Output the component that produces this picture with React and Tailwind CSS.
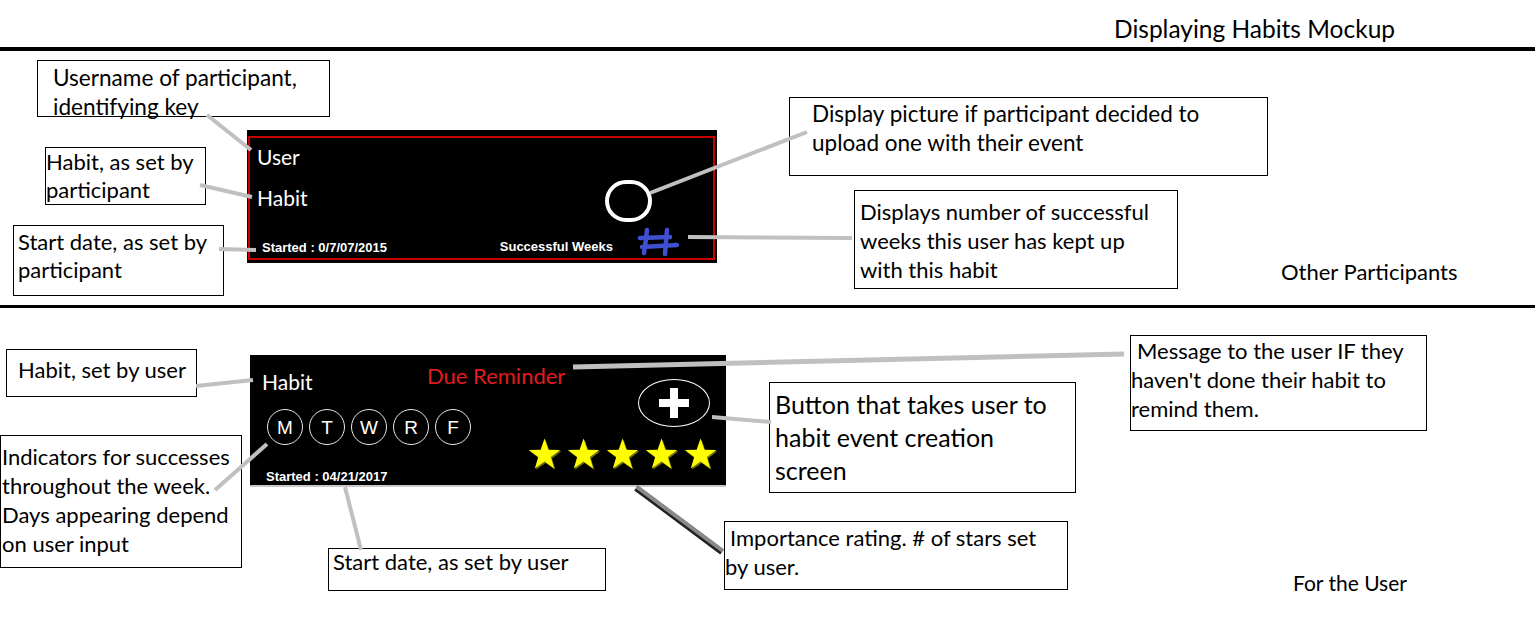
import React from "react";

const cal = { fontFamily: "Lato, 'Open Sans', sans-serif" };
const ar = { fontFamily: "'Liberation Sans', Arial, sans-serif" };

function Box({ className, children }) {
  return (
    <div
      className={"absolute border border-black bg-white text-black whitespace-nowrap " + className}
      style={cal}
    >
      {children}
    </div>
  );
}

const STAR = "17,0 21,11.5 33.2,11.75 23.5,19.1 27,30.8 17,23.8 7,30.8 10.5,19.1 0.8,11.75 13,11.5";

function Star() {
  return (
    <svg width="34" height="33" viewBox="0 0 35 33" className="shrink-0">
      <polygon points={STAR} transform="translate(1.2,1.4)" fill="#6f6f00" />
      <polygon points={STAR} fill="#ffff00" />
    </svg>
  );
}

function Day({ l }) {
  return (
    <div
      className="w-[36px] h-[36px] shrink-0 rounded-full border-[1.5px] border-[#e8e8e8] flex items-center justify-center text-white text-[19px] leading-none"
      style={ar}
    >
      {l}
    </div>
  );
}

function OtherCard() {
  return (
    <div className="absolute left-[247px] top-[130px] w-[470px] h-[133px] bg-black">
      <div className="absolute left-[1px] top-[6px] right-[2px] bottom-[3px] border-2 border-[#c80000]" />
      <div className="relative flex flex-col pl-[10px] pt-[14px] pr-[35px] text-white">
        <div className="text-[21px] leading-[26px]" style={cal}>User</div>
        <div className="flex items-start justify-between mt-[13px] h-[41px] pr-[30px]">
          <div className="text-[21px] leading-[26px] mt-[2px]" style={cal}>Habit</div>
          <div className="w-[47px] h-[42px] -mt-[3px] rounded-full border-[4px] border-white" />
        </div>
        <div className="flex items-start justify-between">
          <div className="mt-[16px] ml-[5px] text-[13px] font-bold leading-[15px]" style={ar}>
            Started : 0/7/07/2015
          </div>
          <div className="flex items-start gap-[24px]">
            <div className="mt-[15px] text-[13px] font-bold leading-[15px]" style={ar}>
              Successful Weeks
            </div>
            <svg width="45" height="35" viewBox="0 0 45 35">
              <g stroke="#3e4fd2" strokeWidth="4.5" strokeLinecap="round" fill="none">
                <path d="M10 6 Q9 16 7 29" />
                <path d="M30 6 Q29 18 28 30" />
                <path d="M3 14 L33 13" />
                <path d="M5 23 Q22 22 40 21" />
              </g>
            </svg>
          </div>
        </div>
      </div>
    </div>
  );
}

function UserCard() {
  return (
    <div className="absolute left-[250px] top-[355px] w-[476px] h-[132px] bg-black border-b-2 border-[#c8c8c8] flex pl-[12px]">
      <div className="flex flex-col w-[165px] shrink-0 pt-[14px]">
        <div className="text-white text-[21px] leading-[26px]" style={cal}>Habit</div>
        <div className="flex gap-[6px] mt-[14px] ml-[5px]">
          {["M", "T", "W", "R", "F"].map((d) => (
            <Day key={d} l={d} />
          ))}
        </div>
        <div className="mt-[24px] ml-[4px] text-white text-[13px] font-bold leading-[15px] whitespace-nowrap" style={ar}>
          Started : 04/21/2017
        </div>
      </div>
      <div className="flex-1 w-0 pt-[8px]">
        <div className="text-[#e01c1c] text-[22px] leading-[26px] whitespace-nowrap" style={cal}>
          Due Reminder
        </div>
      </div>
      <div className="flex flex-col items-end pt-[24px] pr-[8px]">
        <div className="w-[72px] h-[48px] mr-[8px] rounded-[50%] border-[1.5px] border-white flex items-center justify-center">
          <svg width="30" height="30" viewBox="0 0 30 30">
            <rect x="11" y="0" width="8" height="30" fill="#fff" />
            <rect x="0" y="11" width="30" height="8" fill="#fff" />
          </svg>
        </div>
        <div className="flex gap-[5px] mt-[11px]">
          {[0, 1, 2, 3, 4].map((i) => (
            <Star key={i} />
          ))}
        </div>
      </div>
    </div>
  );
}

export default function App() {
  return (
    <div className="relative w-[1535px] h-[629px] bg-white overflow-hidden">
      {/* title */}
      <div className="absolute left-[1114px] top-[14px] text-[24.5px] leading-[30px] text-black" style={cal}>
        Displaying Habits Mockup
      </div>
      <div className="absolute left-0 top-[47px] w-full h-[4px] bg-black" />
      <div className="absolute left-0 top-[305px] w-full h-[3px] bg-black" />

      {/* ---------- Other participants ---------- */}
      <OtherCard />

      <Box className="left-[37px] top-[60px] w-[293px] h-[57px] pl-[15px] pt-[2px] text-[22.6px] leading-[29px]">
        Username of participant,
        <br />
        identifying key
      </Box>
      <Box className="left-[45px] top-[147px] w-[161px] h-[58px] pl-0 pt-0 text-[22px] leading-[28px]">
        Habit, as set by
        <br />
        participant
      </Box>
      <Box className="left-[13px] top-[225px] w-[211px] h-[71px] pl-[4px] pt-[2px] text-[22px] leading-[28px]">
        Start date, as set by
        <br />
        participant
      </Box>
      <Box className="left-[789px] top-[97px] w-[479px] h-[79px] pl-[22px] pt-[1px] text-[22.5px] leading-[29px]">
        Display picture if participant decided to
        <br />
        upload one with their event
      </Box>
      <Box className="left-[854px] top-[190px] w-[324px] h-[99px] pl-[5px] pt-[6px] text-[22px] leading-[29px]">
        Displays number of successful
        <br />
        weeks this user has kept up
        <br />
        with this habit
      </Box>
      <div className="absolute left-[1281px] top-[258px] text-[22px] leading-[28px] text-black" style={cal}>
        Other Participants
      </div>

      {/* ---------- For the user ---------- */}
      <UserCard />

      <Box className="left-[6px] top-[349px] w-[191px] h-[48px] pl-[11px] pt-[6px] text-[22px] leading-[28px]">
        Habit, set by user
      </Box>
      <Box className="left-0 top-[435px] w-[242px] h-[133px] pl-[1px] pt-[6px] text-[22px] leading-[29px]">
        Indicators for successes
        <br />
        throughout the week.
        <br />
        Days appearing depend
        <br />
        on user input
      </Box>
      <Box className="left-[328px] top-[548px] w-[278px] h-[43px] pl-[4px] pt-0 text-[22px] leading-[26px]">
        Start date, as set by user
      </Box>
      <Box className="left-[1130px] top-[335px] w-[297px] h-[96px] pl-0 pt-0 text-[22px] leading-[29px]">
        <span className="pl-[6px]">Message to the user IF they</span>
        <br />
        haven't done their habit to
        <br />
        remind them.
      </Box>
      <Box className="left-[769px] top-[382px] w-[307px] h-[111px] pl-[5px] pt-[5px] text-[25px] leading-[33px]">
        Button that takes user to
        <br />
        habit event creation
        <br />
        screen
      </Box>
      <Box className="left-[724px] top-[521px] w-[344px] h-[69px] pl-0 pt-[1px] text-[22px] leading-[29px]">
        <span className="pl-[5px]">Importance rating. # of stars set</span>
        <br />
        by user.
      </Box>
      <div className="absolute left-[1293px] top-[569px] text-[21px] leading-[28px] text-black" style={cal}>
        For the User
      </div>

      {/* connector lines */}
      <svg className="absolute left-0 top-0 pointer-events-none" width="1535" height="629">
        <g stroke="#c0c0c0" strokeWidth="4" fill="none">
          <line x1="207" y1="115" x2="251" y2="150" />
          <line x1="200" y1="185" x2="252" y2="197" />
          <line x1="219" y1="249" x2="256" y2="250" />
          <line x1="650" y1="193" x2="807" y2="132" />
          <line x1="688" y1="237" x2="852" y2="238" />
          <line x1="196" y1="386" x2="253" y2="380" />
          <line x1="215" y1="490" x2="267" y2="444" />
          <line x1="345" y1="487" x2="361" y2="550" />
          <line x1="573" y1="367" x2="1124" y2="354" strokeWidth="5" />
          <line x1="712" y1="417" x2="771" y2="422" />
        </g>
        <line x1="636" y1="488" x2="722" y2="552" stroke="#222" strokeWidth="6" />
        <line x1="637" y1="487" x2="723" y2="551" stroke="#8a8a8a" strokeWidth="4" />
      </svg>
    </div>
  );
}
